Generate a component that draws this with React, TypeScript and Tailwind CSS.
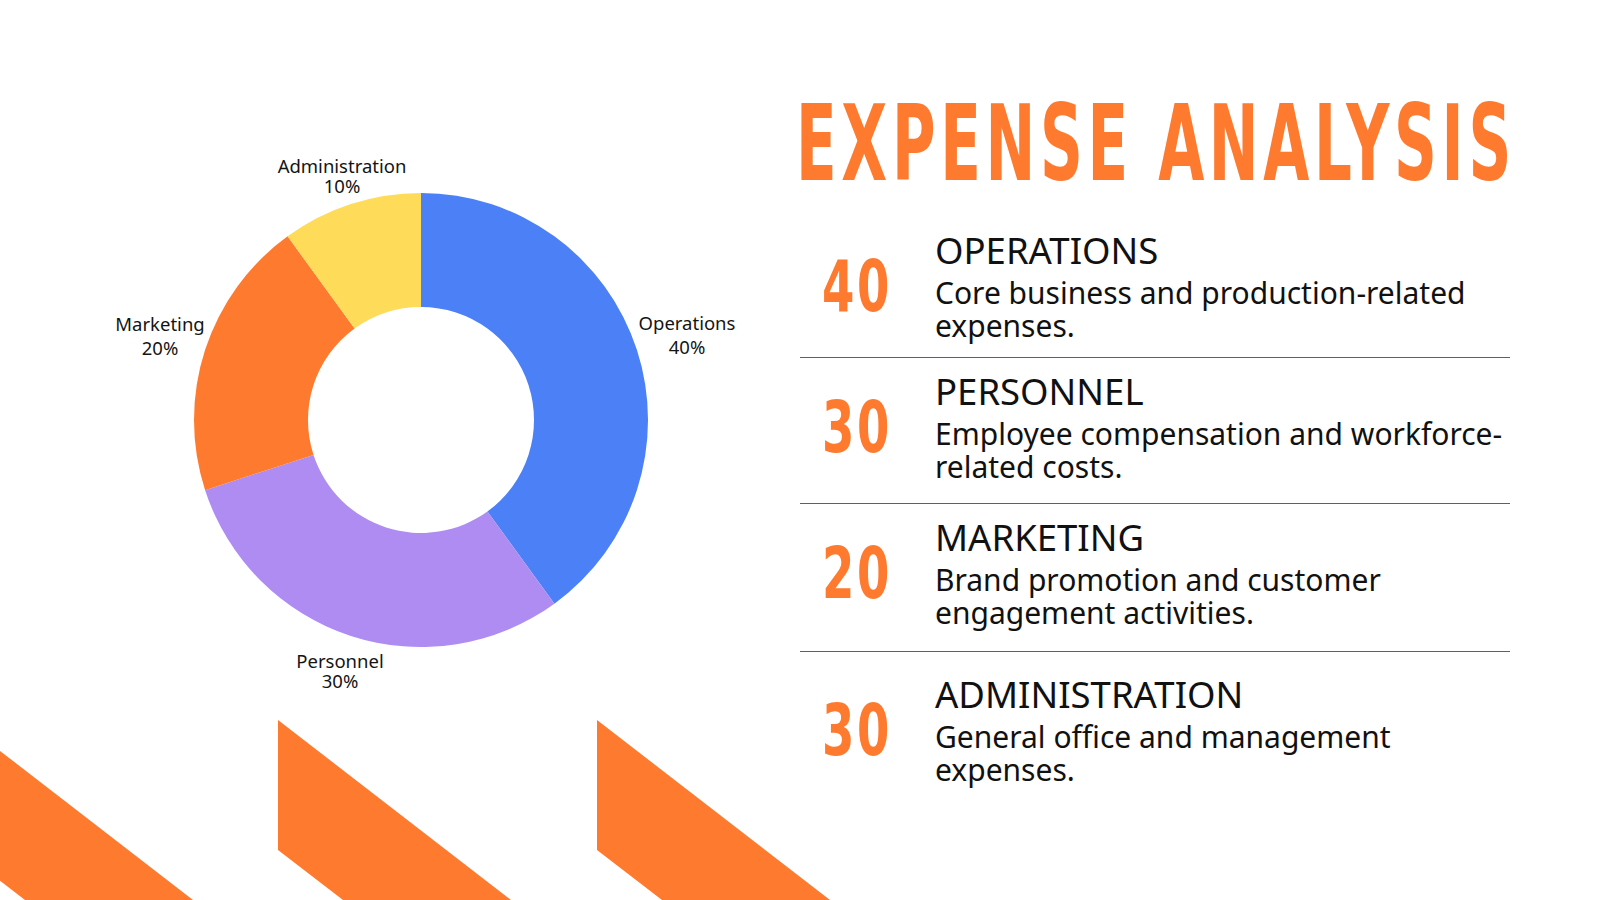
import { useLayoutEffect, useRef, useState, type ReactNode } from 'react'

const slices = [
  { from: 0, to: 144, color: '#4b80f6' },
  { from: 144, to: 252, color: '#ae8cf2' },
  { from: 252, to: 324, color: '#fe7a2f' },
  { from: 324, to: 360, color: '#fedc5a' },
]

const labels = [
  { x: 597, y: 190, gap: 24, name: 'Operations', pct: '40%' },
  { x: 250, y: 528, gap: 20, name: 'Personnel', pct: '30%' },
  { x: 70, y: 191, gap: 24, name: 'Marketing', pct: '20%' },
  { x: 252, y: 33, gap: 20, name: 'Administration', pct: '10%' },
]

const rows = [
  {
    value: '40',
    title: 'OPERATIONS',
    lines: ['Core business and production-related', 'expenses.'],
    pad: 'pt-0 pb-[15px] border-b-[1.5px]',
  },
  {
    value: '30',
    title: 'PERSONNEL',
    lines: ['Employee compensation and workforce-', 'related costs.'],
    pad: 'pt-[13px] pb-[20px] border-b-[1.5px]',
  },
  {
    value: '20',
    title: 'MARKETING',
    lines: ['Brand promotion and customer', 'engagement activities.'],
    pad: 'pt-[13px] pb-[22px] border-b-[1.5px]',
  },
  {
    value: '30',
    title: 'ADMINISTRATION',
    lines: ['General office and management', 'expenses.'],
    pad: 'pt-[22px] pb-0',
  },
]

const CX = 331
const CY = 280
const R = 227
const r = 113

function pt(deg: number, rad: number) {
  const a = (deg * Math.PI) / 180
  return `${(CX + rad * Math.sin(a)).toFixed(2)} ${(CY - rad * Math.cos(a)).toFixed(2)}`
}

function slicePath(from: number, to: number) {
  const large = to - from > 180 ? 1 : 0
  return [
    `M ${pt(from, R)}`,
    `A ${R} ${R} 0 ${large} 1 ${pt(to, R)}`,
    `L ${pt(to, r)}`,
    `A ${r} ${r} 0 ${large} 0 ${pt(from, r)}`,
    'Z',
  ].join(' ')
}

// squeezes a display word into a fixed width, since no condensed display face is installed
function Squeeze({ width, className, children }: { width: number; className: string; children: ReactNode }) {
  const ref = useRef<HTMLSpanElement>(null)
  const [scale, setScale] = useState(1)

  useLayoutEffect(() => {
    const measure = () => {
      const el = ref.current
      if (el && el.offsetWidth) setScale(width / el.offsetWidth)
    }
    measure()
    document.fonts?.ready.then(measure)
  }, [width])

  return (
    <div style={{ width }}>
      <span
        ref={ref}
        className={`inline-block whitespace-nowrap origin-left ${className}`}
        style={{ transform: `scaleX(${scale})` }}
      >
        {children}
      </span>
    </div>
  )
}

function Donut() {
  return (
    <svg width="660" height="560" viewBox="0 0 660 560">
      {slices.map((s) => (
        <path key={s.from} d={slicePath(s.from, s.to)} fill={s.color} />
      ))}
      {labels.map((l) => (
        <text
          key={l.name}
          x={l.x}
          textAnchor="middle"
          fill="#141414"
          fontSize="18.5"
          fontFamily="'Noto Sans', sans-serif"
        >
          <tspan x={l.x} y={l.y}>{l.name}</tspan>
          <tspan x={l.x} y={l.y + l.gap}>{l.pct}</tspan>
        </text>
      ))}
    </svg>
  )
}

function Stripes() {
  const starts = [-40, 278, 597]
  return (
    <svg className="absolute left-0 bottom-0" width="900" height="200" viewBox="0 0 900 200">
      {starts.map((x) => (
        <polygon
          key={x}
          points={`${x},20 ${x + 233},200 ${x + 65},200 ${x},150`}
          fill="#fe7a2f"
        />
      ))}
    </svg>
  )
}

export default function App() {
  return (
    <div className="relative w-[1600px] h-[900px] overflow-hidden bg-white">
      <Stripes />

      <div className="relative flex h-full">
        {/* chart */}
        <div className="w-[796px] shrink-0 pt-[140px] pl-[90px]">
          <Donut />
        </div>

        {/* title + breakdown */}
        <div className="flex-1 pt-[91px]">
          <Squeeze
            width={720}
            className="text-[106px] leading-none font-bold tracking-[0.07em] text-[#fe7a2f] font-['DejaVu_Sans_Condensed','Liberation_Sans_Narrow','DejaVu_Sans',sans-serif]"
          >
            EXPENSE ANALYSIS
          </Squeeze>

          <div className="mt-[33px] ml-[4px] w-[710px] flex flex-col font-['Noto_Sans',sans-serif] text-[#111]">
            {rows.map((row) => (
              <div key={row.title} className={`flex items-center pl-[22px] border-[#606060] ${row.pad}`}>
                <div className="w-[64px] mr-[49px] shrink-0">
                  <Squeeze
                    width={70}
                    className="text-[71px] leading-none font-bold tracking-[0.05em] text-[#fe7a2f] font-['DejaVu_Sans_Condensed','Liberation_Sans_Narrow','DejaVu_Sans',sans-serif]"
                  >
                    {row.value}
                  </Squeeze>
                </div>
                <div className="whitespace-nowrap">
                  <h3 className="text-[36.5px] leading-[40px]">{row.title}</h3>
                  <p className="mt-[6px] text-[30px] leading-[33px]">
                    <span className="block">{row.lines[0]}</span>
                    <span className="block">{row.lines[1]}</span>
                  </p>
                </div>
              </div>
            ))}
          </div>
        </div>
      </div>
    </div>
  )
}
